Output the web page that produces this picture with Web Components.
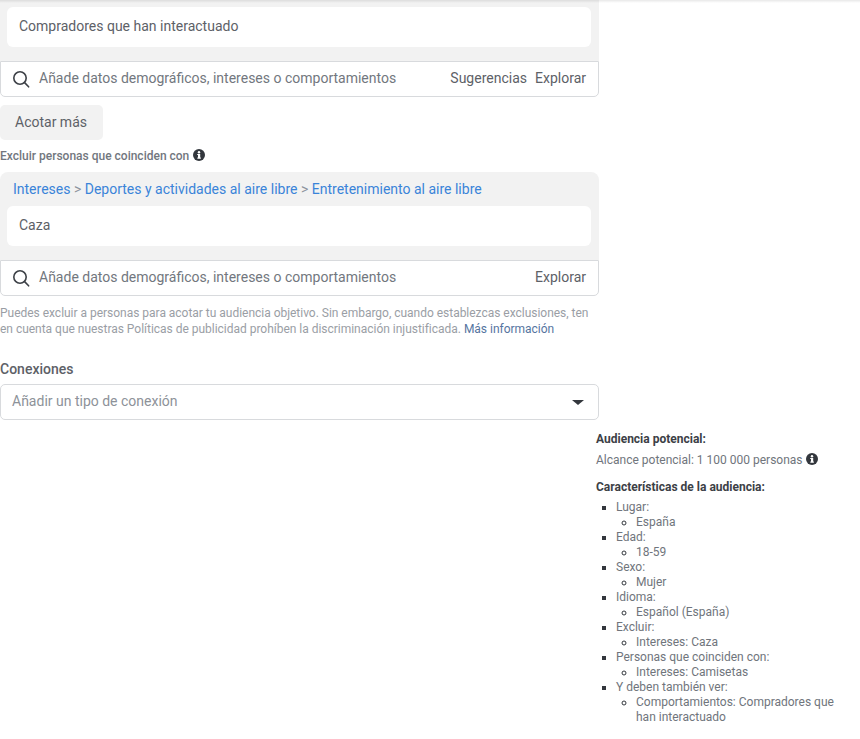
<!DOCTYPE html>
<html lang="es">
<head>
<meta charset="utf-8">
<title>Audiencia</title>
<style>
  html, body { margin: 0; background: #fff; }
  body { font-family: Roboto, "Liberation Sans", sans-serif; color: #444950; }
</style>
</head>
<body>
<targeting-page></targeting-page>

<template id="icon-info">
  <style>
    :host { display: inline-block; width: 12px; height: 12px; vertical-align: -1px; }
    svg { display: block; width: 100%; height: 100%; }
  </style>
  <svg viewBox="0 0 12 12"><circle cx="6" cy="6" r="6" fill="#33373d"/><rect x="5" y="5" width="2.2" height="4.4" fill="#fff"/><rect x="4.2" y="5" width="1.5" height="1" fill="#fff"/><rect x="4.2" y="8.6" width="3.8" height="1" fill="#fff"/><circle cx="6" cy="3.2" r="1.2" fill="#fff"/></svg>
</template>

<script>
class InfoIcon extends HTMLElement {
	connectedCallback() {
		if(this.shadowRoot) return;
		this.attachShadow({ mode: "open" });
		this.shadowRoot.appendChild(document.getElementById("icon-info").content.cloneNode(true));
	}
}
customElements.define("info-icon", InfoIcon);

class SearchRow extends HTMLElement {
	connectedCallback() {
		if(this.shadowRoot) return;
		this.attachShadow({ mode: "open" });
		this.shadowRoot.innerHTML = `
			<style>
				:host {
					display: flex;
					align-items: center;
					height: 36px;
					box-sizing: border-box;
					border: 1px solid #d8dadd;
					border-radius: 0 0 5px 5px;
					background: #fff;
					padding: 0 12px 2px 11px;
					font-size: 14px;
					color: #72777e;
				}
				svg { width: 18px; height: 18px; flex: none; margin-right: 9px; position: relative; top: 1px; }
				.hint { flex: 1; }
				.actions { display: flex; gap: 8px; color: #5d6167; }
			</style>
			<svg viewBox="0 0 18 18" fill="none" stroke="#3d4147" stroke-width="1.6" stroke-linecap="round"><circle cx="8" cy="8" r="6.2"/><path d="M12.6 12.6 16.6 16.8"/></svg>
			<span class="hint">Añade datos demográficos, intereses o comportamientos</span>
			<span class="actions"><slot></slot></span>
		`;
	}
}
customElements.define("search-row", SearchRow);

class TargetBox extends HTMLElement {
	connectedCallback() {
		if(this.shadowRoot) return;
		this.attachShadow({ mode: "open" });
		this.shadowRoot.innerHTML = `
			<style>
				:host { display: block; width: 599px; }
				.panel { background: #f2f2f2; padding: 7px 8px 14px 7px; border-radius: 8px 8px 0 0; }
				:host([cut]) .panel { border-radius: 0; }
				.item {
					background: #fff;
					border-radius: 6px;
					height: 40px;
					line-height: 38px;
					padding: 0 12px;
					font-size: 14px;
					color: #5d6167;
				}
			</style>
			<div class="panel">
				<slot name="crumbs"></slot>
				<div class="item"><slot name="item"></slot></div>
			</div>
			<slot></slot>
		`;
	}
}
customElements.define("target-box", TargetBox);

class AudienceSummary extends HTMLElement {
	connectedCallback() {
		if(this.shadowRoot) return;
		this.attachShadow({ mode: "open" });
		const groups = [
			["Lugar:", "España"],
			["Edad:", "18-59"],
			["Sexo:", "Mujer"],
			["Idioma:", "Español (España)"],
			["Excluir:", "Intereses: Caza"],
			["Personas que coinciden con:", "Intereses: Camisetas"],
			["Y deben también ver:", "Comportamientos: Compradores que han interactuado"],
		];
		const list = groups.map(([k, v]) => `<li>${k}<ul><li>${v}</li></ul></li>`).join("");
		this.shadowRoot.innerHTML = `
			<style>
				:host { display: block; width: 250px; margin: 12px 0 0 596px; font-size: 12px; line-height: 15px; color: #70757c; }
				h4 { margin: 0; font-size: 12px; line-height: 15px; font-weight: 700; color: #3c4046; }
				p { margin: 6px 0 12px; }
				ul { margin: 5px 0 0; padding: 0 0 0 20px; list-style: square; }
				ul ul { margin: 0; list-style: circle; }
				li::marker { color: #33373d; }
			</style>
			<h4>Audiencia potencial:</h4>
			<p>Alcance potencial: 1 100 000 personas <info-icon></info-icon></p>
			<h4>Características de la audiencia:</h4>
			<ul>${list}</ul>
		`;
	}
}
customElements.define("audience-summary", AudienceSummary);

class TargetingPage extends HTMLElement {
	connectedCallback() {
		if(this.shadowRoot) return;
		this.attachShadow({ mode: "open" });
		this.shadowRoot.innerHTML = `
			<style>
				:host { display: block; width: 860px; position: relative; }
				/* faint shadow of the sticky bar above the crop */
				:host::before {
					content: "";
					position: absolute;
					left: 0; right: 0; top: 0;
					height: 3px;
					background: linear-gradient(rgba(0,0,0,.09), rgba(0,0,0,0));
				}
				.col { width: 599px; }
				.more {
					display: inline-block;
					margin-top: 8px;
					height: 35px;
					line-height: 34px;
					padding: 0 16px 0 15px;
					background: #f2f2f2;
					border-radius: 5px;
					font-size: 14px;
					color: #5d6167;
				}
				.label { margin: 9px 0 8px; font-size: 12px; line-height: 15px; font-weight: 500; color: #72777e; }
				.label info-icon { margin-left: 1px; }
				.crumbs { display: block; font-size: 14px; line-height: 20px; color: #8d949e; padding: 0 6px 7px; }
				.crumbs a { color: #3a84d9; text-decoration: none; }
				.note { margin: 9px 0 0; font-size: 12px; line-height: 16px; color: #9a9ea5; letter-spacing: -0.02px; }
				.note span { display: block; white-space: nowrap; }
				.note a { color: #56759f; text-decoration: none; }
				h3 { margin: 23px 0 6px; font-size: 14px; line-height: 18px; font-weight: 500; color: #5d6167; }
				.select {
					display: flex;
					align-items: center;
					justify-content: space-between;
					height: 36px;
					box-sizing: border-box;
					border: 1px solid #d8dadd;
					border-radius: 5px;
					padding: 0 14px 2px 11px;
					font-size: 14px;
					color: #8d9299;
				}
				.arrow { width: 0; height: 0; margin-top: 2px; border: 6px solid transparent; border-top: 5px solid #33373d; border-bottom: 0; }
			</style>
			<div class="col">
				<target-box cut>
					<span slot="item">Compradores que han interactuado</span>
					<search-row><span>Sugerencias</span><span>Explorar</span></search-row>
				</target-box>
				<span class="more">Acotar más</span>
				<div class="label">Excluir personas que coinciden con <info-icon></info-icon></div>
				<target-box>
					<span class="crumbs" slot="crumbs"><a>Intereses</a> &gt; <a>Deportes y actividades al aire libre</a> &gt; <a>Entretenimiento al aire libre</a></span>
					<span slot="item">Caza</span>
					<search-row><span>Explorar</span></search-row>
				</target-box>
				<p class="note"><span>Puedes excluir a personas para acotar tu audiencia objetivo. Sin embargo, cuando establezcas exclusiones, ten</span><span>en cuenta que nuestras Políticas de publicidad prohíben la discriminación injustificada. <a>Más información</a></span></p>
				<h3>Conexiones</h3>
				<div class="select"><span>Añadir un tipo de conexión</span><span class="arrow"></span></div>
			</div>
			<audience-summary></audience-summary>
		`;
	}
}
customElements.define("targeting-page", TargetingPage);
</script>
</body>
</html>
